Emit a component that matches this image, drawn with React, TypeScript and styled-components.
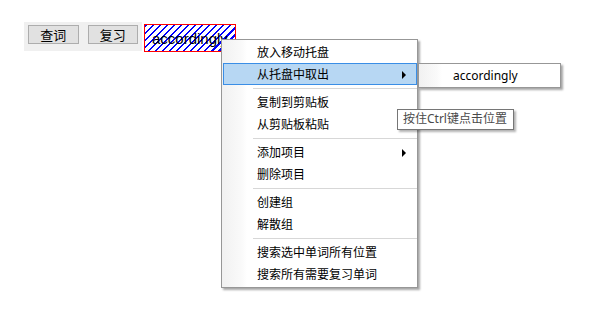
import React from 'react';
import styled, { createGlobalStyle } from 'styled-components';

const GlobalStyle = createGlobalStyle`
  html, body {
    margin: 0;
    padding: 0;
    background: #ffffff;
  }
  body {
    font-family: "Noto Sans", "Noto Sans CJK SC", sans-serif;
    font-size: 12px;
    color: #000;
  }
`;

const Page = styled.div`
  position: relative;
  width: 600px;
  height: 320px;
  padding: 22px 0 0 24px;
  box-sizing: border-box;
  display: flex;
  align-items: flex-start;
  gap: 2px;
`;

const Toolbar = styled.div`
  display: flex;
  gap: 9px;
  width: 118px;
  height: 29px;
  box-sizing: border-box;
  padding: 3px 4px;
  background: #f0f0f0;
`;

const ToolButton = styled.button`
  width: 51px;
  height: 19px;
  box-sizing: border-box;
  border: 1px solid #adadad;
  background: #e1e1e1;
  padding: 0;
  font-family: "Noto Sans CJK SC", sans-serif;
  font-size: 13px;
  line-height: 17px;
  color: #000;
`;

const WordBox = styled.div`
  margin-top: 2px;
  width: 92px;
  height: 28px;
  box-sizing: border-box;
  border: 1px solid #ff0000;
  background: repeating-linear-gradient(
    135deg,
    #0000ff 0 1.5px,
    #ffffff 1.5px 5px
  );
  padding-left: 7px;
  font-family: "Liberation Sans", Arial, sans-serif;
  font-size: 15px;
  line-height: 28px;
  white-space: nowrap;
  overflow: hidden;
`;

const Menu = styled.div`
  position: absolute;
  left: 221px;
  top: 39px;
  width: 197px;
  box-sizing: border-box;
  border: 1px solid #979797;
  padding: 1px 0 2px 1px;
  background: linear-gradient(90deg, #f1f1f1 0, #fafafa 20px, #ffffff 25px);
  box-shadow: 2px 2px 2px rgba(0, 0, 0, 0.35);
`;

const Item = styled.div<{ $active?: boolean }>`
  position: relative;
  height: 22px;
  box-sizing: border-box;
  padding-left: 33px;
  line-height: 21px;
  border: 1px solid ${(p) => (p.$active ? '#3a8ee6' : 'transparent')};
  background: ${(p) => (p.$active ? '#b7d7f3' : 'transparent')};
`;

const Arrow = styled.span`
  position: absolute;
  right: 10px;
  top: 7px;
  width: 0;
  height: 0;
  border-top: 4px solid transparent;
  border-bottom: 4px solid transparent;
  border-left: 4px solid #000;
`;

const Separator = styled.div`
  height: 6px;
  display: flex;
  align-items: center;
  padding-left: 30px;
  &::after {
    content: '';
    flex: 1;
    height: 1px;
    background: #d7d7d7;
  }
`;

const SubMenu = styled.div`
  position: absolute;
  left: 418px;
  top: 63px;
  width: 143px;
  height: 25px;
  box-sizing: border-box;
  border: 1px solid #979797;
  padding: 1px 0 0 1px;
  background: linear-gradient(90deg, #f1f1f1 0, #fafafa 18px, #ffffff 23px);
  box-shadow: 2px 2px 2px rgba(0, 0, 0, 0.35);
`;

const SubItem = styled.div`
  height: 22px;
  line-height: 21px;
  padding-left: 33px;
`;

const Tooltip = styled.div`
  position: absolute;
  left: 397px;
  top: 109px;
  width: 117px;
  height: 21px;
  box-sizing: border-box;
  border: 1px solid #767676;
  background: #ffffff;
  padding-left: 5px;
  line-height: 18px;
  color: #4a4a4a;
  white-space: nowrap;
  box-shadow: 2px 2px 2px rgba(0, 0, 0, 0.3);
`;

type Entry = { label: string; sub?: boolean; active?: boolean } | 'sep';

const entries: Entry[] = [
  { label: '放入移动托盘' },
  { label: '从托盘中取出', sub: true, active: true },
  'sep',
  { label: '复制到剪贴板' },
  { label: '从剪贴板粘贴' },
  'sep',
  { label: '添加项目', sub: true },
  { label: '删除项目' },
  'sep',
  { label: '创建组' },
  { label: '解散组' },
  'sep',
  { label: '搜索选中单词所有位置' },
  { label: '搜索所有需要复习单词' },
];

export default function App() {
  return (
    <>
      <GlobalStyle />
      <Page>
        <Toolbar>
          <ToolButton>查词</ToolButton>
          <ToolButton>复习</ToolButton>
        </Toolbar>
        <WordBox>accordingly</WordBox>

        {/* context menu, opened over the word */}
        <Menu>
          {entries.map((e, i) =>
            e === 'sep' ? (
              <Separator key={i} />
            ) : (
              <Item key={i} $active={e.active}>
                {e.label}
                {e.sub && <Arrow />}
              </Item>
            )
          )}
        </Menu>

        <SubMenu>
          <SubItem>accordingly</SubItem>
        </SubMenu>

        <Tooltip>按住Ctrl键点击位置</Tooltip>
      </Page>
    </>
  );
}
